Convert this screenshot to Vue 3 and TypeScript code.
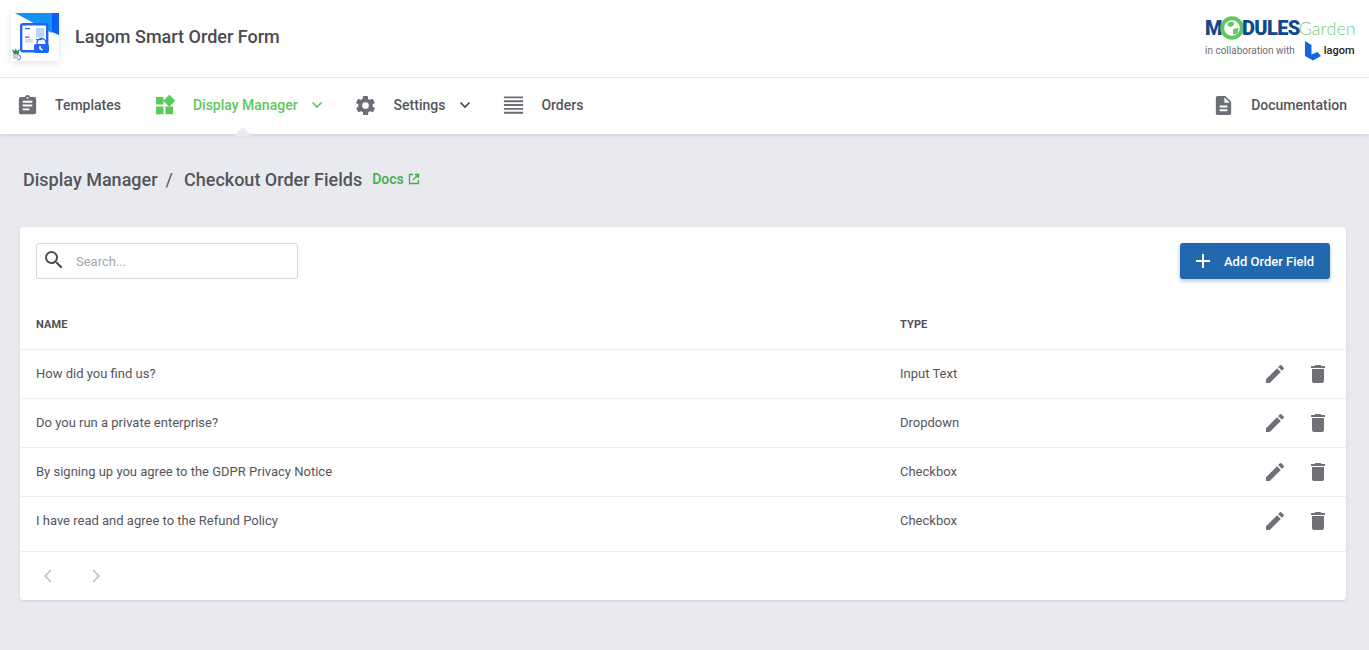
<script setup lang="ts">
const rows = [
  { name: 'How did you find us?', type: 'Input Text' },
  { name: 'Do you run a private enterprise?', type: 'Dropdown' },
  { name: 'By signing up you agree to the GDPR Privacy Notice', type: 'Checkbox' },
  { name: 'I have read and agree to the Refund Policy', type: 'Checkbox' },
]
</script>

<template>
  <div class="page">
    <header class="top">
      <div class="brand">
        <div class="logo">
          <svg width="48" height="48" viewBox="0 0 48 48">
            <rect width="48" height="48" fill="#fff" />
            <path d="M4 0H41V20Z" fill="#1590f5" />
            <path d="M41 0H48V22L41 19Z" fill="#0d5ff0" />
            <path d="M41 20L48 23H41Z" fill="#eef2fb" />
            <rect x="10.200" y="11.200" width="26" height="27" rx="2" fill="#fff" stroke="#1f66f5" stroke-width="2.400" />
            <rect x="14" y="15" width="5" height="1.200" fill="#1f66f5" />
            <rect x="14" y="23.500" width="4.500" height="1.200" fill="#1f66f5" />
            <rect x="14" y="26" width="8" height="3.500" fill="#d9dde3" />
            <rect x="25" y="15" width="8" height="9.500" fill="#bcd3fb" />
            <rect x="25" y="26" width="6" height="1.200" fill="#1f66f5" />
            <path d="M26 31v-1a4.500 4.500 0 0 1 9 0v1" fill="none" stroke="#1f66f5" stroke-width="1.300" />
            <rect x="23" y="31" width="15" height="9" rx="2" fill="#1f66f5" />
            <path d="M29 33v2.500l2.500 1.500" fill="none" stroke="#fff" stroke-width="1.500" />
            <path d="M1 36l3 2 .5-3 1.500 3 3-2-2 6H3Z" fill="#2e8b57" />
            <rect x="2" y="41" width="5" height="5" fill="#c9ccd1" />
            <path d="M6.500 41.500a3 3 0 0 1 3 3c0 1.500-1 2.500-3 2.500" fill="none" stroke="#1f66f5" stroke-width="1" />
          </svg>
        </div>
        <h1 class="title">Lagom Smart Order Form</h1>
      </div>
      <div class="partner">
        <div class="mg">
          <span class="mg-m">M</span>
          <svg class="globe" width="24" height="24" viewBox="0 0 22 22">
            <circle cx="11" cy="11" r="9" fill="#fff" stroke="#5fc75f" stroke-width="3.600" />
            <path d="M7 6l5-1 1 3-3 2-3-1ZM12 12l5-1-1 5-4 1Z" fill="#5fc75f" />
          </svg>
          <span class="mg-m">DULES</span><span class="mg-g">Garden</span>
        </div>
        <div class="collab">
          <span>in collaboration with</span>
          <svg class="lagom-mark" width="16" height="20" viewBox="0 0 16 20">
            <path d="M0 0L6.500 4V13.500L12.500 11 16 15 8 19.500 0 15Z" fill="#1466e0" />
          </svg>
          <b>lagom</b>
        </div>
      </div>
    </header>

    <nav class="nav">
      <a class="item">
        <svg class="ic" viewBox="0 0 24 24"><path d="M19 3h-4.200a3 3 0 0 0-5.600 0H5a2 2 0 0 0-2 2v14a2 2 0 0 0 2 2h14a2 2 0 0 0 2-2V5a2 2 0 0 0-2-2Zm-7 0a1 1 0 1 1 0 2 1 1 0 0 1 0-2Zm2 14H7v-2h7Zm3-4H7v-2h10Zm0-4H7V7h10Z" /></svg>
        <span>Templates</span>
      </a>
      <a class="item active wide">
        <svg class="ic" viewBox="0 0 24 24"><path d="M3 3h8v8H3ZM3 13h8v8H3ZM13 13h8v8h-8ZM17 0.700 23.300 7 17 13.300 10.700 7Z" /></svg>
        <span>Display Manager</span>
        <svg class="chev" viewBox="0 0 12 8"><path d="M1.500 1.500 6 6l4.500-4.500" /></svg>
      </a>
      <a class="item wide settings">
        <svg class="ic" viewBox="0 0 24 24"><path d="M19.400 13a7.500 7.500 0 0 0 0-2l2.100-1.600a.5.5 0 0 0 .1-.6l-2-3.500a.5.5 0 0 0-.6-.2l-2.500 1a7.500 7.500 0 0 0-1.700-1l-.4-2.700a.5.5 0 0 0-.5-.4h-4a.5.500 0 0 0-.5.400l-.4 2.700a7.500 7.500 0 0 0-1.700 1l-2.500-1a.5.5 0 0 0-.6.200l-2 3.500a.5.5 0 0 0 .1.600L4.600 11a7.500 7.500 0 0 0 0 2l-2.100 1.600a.5.5 0 0 0-.1.600l2 3.500a.5.5 0 0 0 .6.200l2.500-1a7.500 7.500 0 0 0 1.700 1l.4 2.700a.5.5 0 0 0 .5.400h4a.5.500 0 0 0 .5-.4l.4-2.700a7.500 7.500 0 0 0 1.700-1l2.500 1a.5.5 0 0 0 .6-.2l2-3.500a.5.5 0 0 0-.1-.6ZM12 15.500a3.500 3.500 0 1 1 0-7 3.500 3.500 0 0 1 0 7Z" /></svg>
        <span>Settings</span>
        <svg class="chev" viewBox="0 0 12 8"><path d="M1.500 1.500 6 6l4.500-4.500" /></svg>
      </a>
      <a class="item">
        <svg class="ic" viewBox="0 0 24 24"><path d="M2 2.500h20v2H2ZM2 6.500h20v2H2ZM2 10.500h20v2H2ZM2 14.500h20v2H2ZM2 18.500h20v2H2Z" /></svg>
        <span>Orders</span>
      </a>
      <a class="item doc">
        <svg class="ic" viewBox="0 0 24 24"><path d="M14 2H6a2 2 0 0 0-2 2v16a2 2 0 0 0 2 2h12a2 2 0 0 0 2-2V8Zm2 16H8v-2h8Zm0-4H8v-2h8Zm-3-5V3.500L18.500 9Z" /></svg>
        <span>Documentation</span>
      </a>
    </nav>

    <main class="main">
      <div class="crumbs">
        <span>Display Manager</span>
        <span class="sep">/</span>
        <span>Checkout Order Fields</span>
        <a class="docs">Docs
          <svg width="12" height="12" viewBox="0 0 12 12"><path d="M10.500 7v3.500h-9v-9H5M7 1.500h3.500V5M10.500 1.500 5 7" /></svg>
        </a>
      </div>

      <section class="card">
        <div class="tools">
          <label class="search">
            <svg width="24" height="24" viewBox="0 0 24 24"><path d="M15.500 14h-.79l-.28-.27A6.470 6.470 0 0 0 16 9.500 6.500 6.500 0 1 0 9.500 16c1.610 0 3.090-.59 4.230-1.570l.27.28v.79l5 4.990L20.490 19l-4.990-5Zm-6 0C7.010 14 5 11.990 5 9.500S7.010 5 9.500 5 14 7.010 14 9.500 11.990 14 9.500 14Z" /></svg>
            <input type="text" placeholder="Search..." />
          </label>
          <button class="add" type="button">
            <svg width="18" height="18" viewBox="0 0 18 18"><path d="M9 2v14M2 9h14" /></svg>
            <span>Add Order Field</span>
          </button>
        </div>

        <div class="row head">
          <div>NAME</div>
          <div>TYPE</div>
          <div></div>
        </div>
        <div v-for="r in rows" :key="r.name" class="row body">
          <div class="cell">{{ r.name }}</div>
          <div class="cell">{{ r.type }}</div>
          <div class="acts">
            <svg class="act" viewBox="0 0 24 24"><path d="M3 17.250V21h3.750L17.800 9.940l-3.750-3.750ZM20.700 7.040a1 1 0 0 0 0-1.410l-2.340-2.340a1 1 0 0 0-1.410 0l-1.830 1.830 3.750 3.750Z" /></svg>
            <svg class="act" viewBox="0 0 24 24"><path d="M6 19a2 2 0 0 0 2 2h8a2 2 0 0 0 2-2V7H6ZM19 4h-3.500l-1-1h-5l-1 1H5v2h14Z" /></svg>
          </div>
        </div>

        <div class="pager">
          <svg viewBox="0 0 10 16"><path d="M8 2 2 8l6 6" /></svg>
          <svg viewBox="0 0 10 16"><path d="M2 2l6 6-6 6" /></svg>
        </div>
      </section>
    </main>
  </div>
</template>

<style>
html, body { margin: 0; background: #e9eaef; }
</style>

<style scoped>
.page {
  min-height: 650px;
  background: #e9eaef;
  font-family: Roboto, "Liberation Sans", sans-serif;
  color: #4f4f55;
}
.top {
  height: 78px;
  box-sizing: border-box;
  background: #fff;
  border-bottom: 1px solid #eeeef1;
  display: flex;
  align-items: center;
  justify-content: space-between;
  padding: 0 13px 0 11px;
}
.brand { display: flex; align-items: center; gap: 16px; margin-top: -4px; }
.logo { width: 48px; height: 48px; box-shadow: 0 2px 6px rgba(40, 50, 80, .14); }
.logo svg { display: block; }
.title { margin: 0; font-size: 18px; font-weight: 500; color: #4a4a50; }
.partner { width: 151px; margin-top: -1px; }
.mg { display: flex; align-items: center; height: 24px; font-size: 20px; line-height: 24px; white-space: nowrap; }
.mg-m { color: #14488c; font-weight: 900; letter-spacing: -.6px; }
.globe { margin: 0 -2px; flex: none; }
.mg-g { color: #72cf72; font-family: Lato, sans-serif; font-weight: 300; font-size: 18px; margin-left: -1px; }
.collab { display: flex; align-items: center; font-size: 10px; color: #6d6f76; height: 20px; margin-top: 1px; white-space: nowrap; }
.lagom-mark { margin-left: 10px; margin-right: 3px; flex: none; }
.collab b { color: #222; font-size: 11px; font-weight: 500; }
.nav {
  height: 56px;
  box-sizing: border-box;
  background: #fff;
  display: flex;
  align-items: center;
  padding: 0 22px 2px 16px;
  box-shadow: 0 1px 4px rgba(50, 55, 80, .16);
  position: relative;
}
.item { display: flex; align-items: center; font-size: 14px; font-weight: 500; color: #55565c; margin-right: 32px; position: relative; }
.ic { width: 23px; height: 23px; fill: #6c6e76; margin-right: 16px; }
.wide { margin-right: 31px; }
.wide .ic { margin-right: 17px; }
.chev { width: 12px; height: 8px; margin-left: 13px; fill: none; stroke: #4a4d55; stroke-width: 1.700; }
.settings .chev { margin-left: 14px; }
.active { color: #5cc95c; }
.active .ic { fill: #5cc95c; }
.active .chev { stroke: #5cc95c; }
.active::after {
  content: "";
  position: absolute;
  left: 81px;
  top: 33px;
  width: 0;
  height: 0;
  border-left: 9px solid transparent;
  border-right: 9px solid transparent;
  border-bottom: 9px solid #e9eaef;
}
.doc { margin-left: auto; margin-right: 0; }
.main { padding: 0 23px 0 20px; }
.crumbs {
  height: 93px;
  box-sizing: border-box;
  padding: 34px 0 0 3px;
  display: flex;
  align-items: flex-start;
  font-size: 18px;
  font-weight: 500;
  line-height: 24px;
  color: #54555b;
}
.sep { margin: 0 11px 0 8px; font-weight: 400; }
.docs { display: flex; align-items: center; gap: 4px; margin-left: 10px; font-size: 14px; color: #41ad49; line-height: 24px; height: 24px; margin-top: -1px; }
.docs svg { fill: none; stroke: #41ad49; stroke-width: 1.300; }
.card { background: #fff; border-radius: 3px; box-shadow: 0 1px 3px rgba(50, 55, 80, .14); height: 373px; }
.tools { display: flex; justify-content: space-between; align-items: center; padding: 16px 16px 0; }
.search {
  width: 262px;
  height: 36px;
  box-sizing: border-box;
  border: 1px solid #d5d6dc;
  border-radius: 3px;
  display: flex;
  align-items: center;
  padding-left: 5px;
  gap: 10px;
}
.search svg { fill: #4a4c55; flex: none; margin-top: -3px; }
.search input { border: 0; outline: 0; font: 400 13px Roboto, sans-serif; width: 200px; padding: 0; color: #555; }
.search input::placeholder { color: #a3a5ab; opacity: 1; }
.add {
  width: 150px;
  height: 36px;
  border: 0;
  border-radius: 3px;
  background: #2268ae;
  color: #fff;
  font: 500 13px Roboto, sans-serif;
  display: flex;
  align-items: center;
  padding: 0 0 0 14px;
  gap: 12px;
  box-shadow: 0 2px 4px rgba(30, 50, 90, .3);
}
.add svg { fill: none; stroke: #fff; stroke-width: 2; flex: none; }
.row {
  display: grid;
  grid-template-columns: 864px 1fr 84px;
  align-items: center;
  padding: 0 16px;
  box-sizing: border-box;
  font-size: 13px;
  color: #55565c;
}
.head { height: 70px; font-size: 11px; font-weight: 700; color: #505157; padding-top: 20px; letter-spacing: .1px; }
.body { height: 49px; border-top: 1px solid #eeeef1; }
.cell { margin-bottom: 2px; }
.acts { display: flex; justify-content: flex-end; gap: 19px; }
.act { width: 24px; height: 24px; fill: #6f7078; }
.pager {
  height: 49px;
  box-sizing: border-box;
  border-top: 1px solid #eeeef1;
  margin-top: 6px;
  display: flex;
  align-items: center;
  gap: 38px;
  padding: 0 0 1px 23px;
}
.pager svg { width: 10px; height: 16px; fill: none; stroke: #c8cbd2; stroke-width: 1.800; }
</style>
